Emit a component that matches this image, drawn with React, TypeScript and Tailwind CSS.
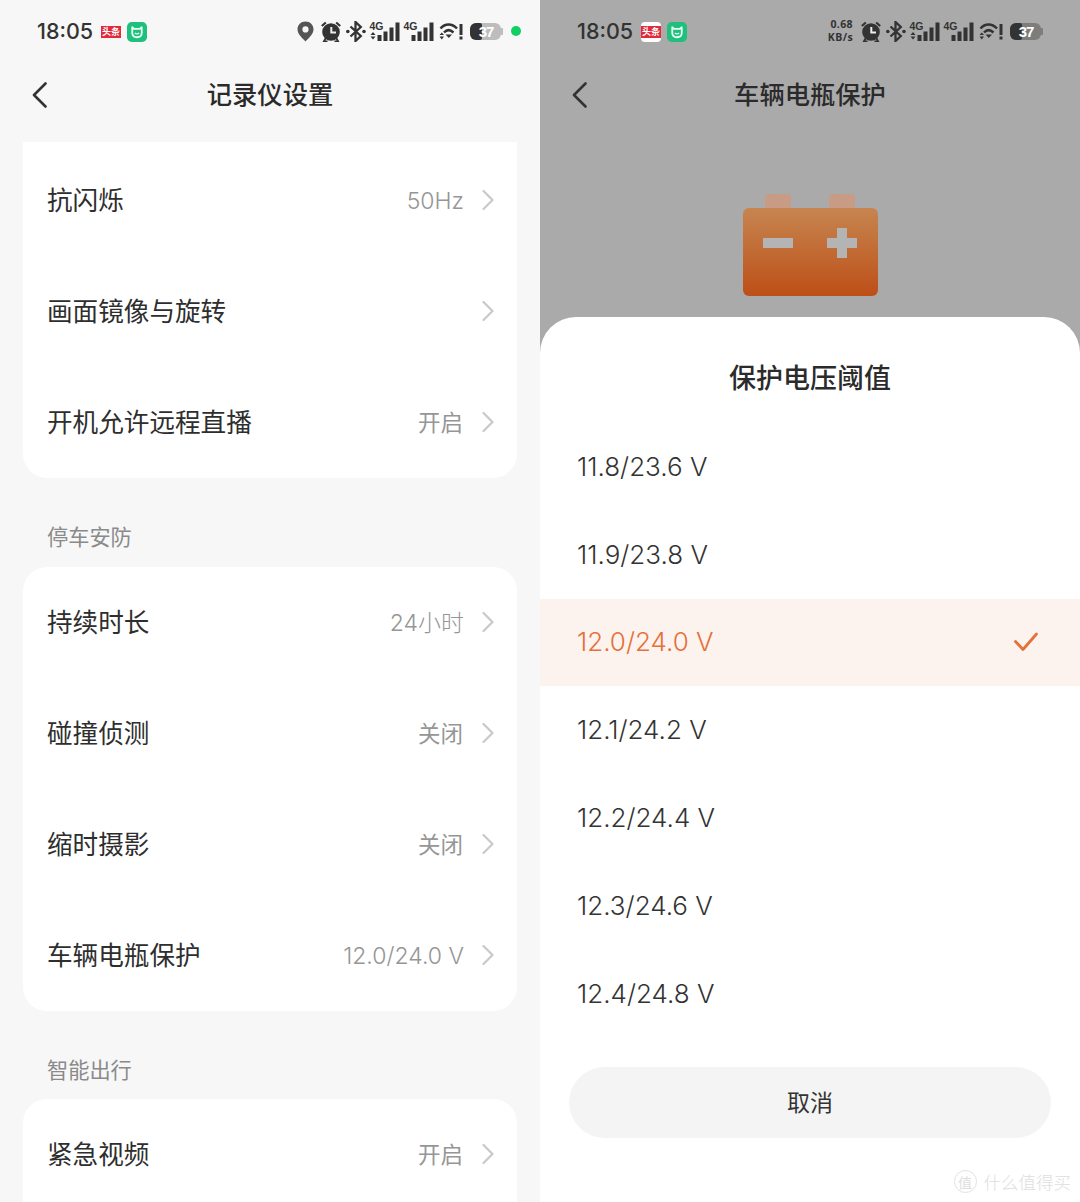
const cjk = { fontFamily: '"Noto Sans CJK SC", sans-serif' };
const num = { fontFamily: 'Inter, "Noto Sans CJK SC", sans-serif' };

function Chevron() {
  return (
    <svg width="12" height="20" viewBox="0 0 12 20" fill="none" className="shrink-0">
      <path d="M1.5 1 L10.5 10 L1.5 19" stroke="#c9c9c9" strokeWidth="2.2" strokeLinecap="round" strokeLinejoin="round" />
    </svg>
  );
}

function Back() {
  return (
    <svg width="16" height="26" viewBox="0 0 16 26" fill="none" className="shrink-0">
      <path d="M13.5 1.5 L2 13 L13.5 24.5" stroke="#333" strokeWidth="2.6" strokeLinecap="round" strokeLinejoin="round" />
    </svg>
  );
}

function Pin() {
  return (
    <svg width="17" height="21" viewBox="0 0 17 21" className="shrink-0">
      <path fillRule="evenodd" fill="#555" d="M8.5 0.5 C3.9 0.5 0.5 4 0.5 8.3 C0.5 13 5 17 8.5 20.5 C12 17 16.5 13 16.5 8.3 C16.5 4 13.1 0.5 8.5 0.5 Z M8.5 5.3 A3.1 3.1 0 1 1 8.5 11.5 A3.1 3.1 0 1 1 8.5 5.3 Z" />
    </svg>
  );
}

function Alarm() {
  return (
    <svg width="20" height="21" viewBox="0 0 20 21" className="shrink-0">
      <circle cx="10" cy="11" r="8.8" fill="#333" />
      <path d="M10.3 6 V11.6 H15" stroke="#eeeeee" strokeWidth="2" fill="none" />
      <path d="M0.8 5 L4.8 1.5 M19.2 5 L15.2 1.5" stroke="#333" strokeWidth="2.2" />
      <path d="M4.5 17.5 L2.8 20.5 H6.5 M15.5 17.5 L17.2 20.5 H13.5" stroke="#333" strokeWidth="1.8" fill="none" />
    </svg>
  );
}

function Bluetooth() {
  return (
    <svg width="20" height="21" viewBox="0 0 20 21" className="shrink-0">
      <path d="M4.5 5.5 L14.8 15 L9.5 20 V1 L14.8 6 L4.5 15.5" stroke="#333" strokeWidth="2.3" fill="none" />
      <circle cx="1.8" cy="10.5" r="1.8" fill="#333" />
      <circle cx="18" cy="10.5" r="1.8" fill="#333" />
    </svg>
  );
}

function Signal({ arrows }: { arrows: boolean }) {
  return (
    <div className="relative h-[21px] w-[31px] shrink-0">
      <svg width="31" height="21" viewBox="0 0 31 21" className="block">
        <g fill="#333">
          {arrows && (
            <>
              <path d="M1.5 14 L4 11 L6.5 14 Z" />
              <path d="M1.5 15.5 L6.5 15.5 L4 18.5 Z" />
            </>
          )}
          <rect x="8.5" y="14" width="4" height="6" />
          <rect x="14.5" y="10.5" width="4" height="9.5" />
          <rect x="20.5" y="6.5" width="4" height="13.5" />
          <rect x="26.5" y="1.5" width="4" height="18.5" />
        </g>
      </svg>
      <span className="absolute left-[0.5px] top-0 text-[10.5px] font-bold leading-[10px] text-[#333]" style={{ fontFamily: '"Liberation Sans", sans-serif' }}>4G</span>
    </div>
  );
}

function Wifi() {
  return (
    <svg width="24" height="21" viewBox="0 0 24 21" className="shrink-0">
      <g fill="none" stroke="#333" strokeWidth="2.5">
        <path d="M1.5 7.5 C6 2.2 13 2.2 18 7.5" />
        <path d="M5 11.5 C8 8.3 11 8.3 14.5 11.5" />
      </g>
      <path d="M6.5 13.5 L13 13.5 L9.8 17 Z" fill="#333" />
      <path d="M0.5 14 L2.8 11.5 L5 14 Z M0.5 15.5 L5 15.5 L2.8 18.5 Z" fill="#333" />
      <rect x="20.5" y="3" width="3" height="11" fill="#333" />
      <rect x="20.5" y="15.5" width="3" height="3" fill="#333" />
    </svg>
  );
}

function Battery({ gray }: { gray: string }) {
  return (
    <div className="flex shrink-0 items-center">
      <div className="relative flex h-[17px] w-[31px] overflow-hidden rounded-[6px]" style={{ background: gray }}>
        <div className="h-full w-[12px] rounded-r-[2px] bg-[#333]" />
        <span className="absolute inset-0 flex items-center justify-center pl-[1px] text-[15px] font-bold leading-none tracking-[-1px] text-white" style={{ fontFamily: '"Liberation Sans", sans-serif' }}>37</span>
      </div>
      <div className="h-[7px] w-[2px] rounded-r-[1px]" style={{ background: gray }} />
    </div>
  );
}

function MiBadge() {
  return (
    <svg width="20" height="20" viewBox="0 0 19 19" className="shrink-0">
      <rect width="19" height="19" rx="4.5" fill="#1fc07e" />
      <path d="M5 5 L7 6.5 H12 L14 5 V10.5 C14 13 12 14.5 9.5 14.5 C7 14.5 5 13 5 10.5 Z" fill="none" stroke="#e9fff4" strokeWidth="1.7" strokeLinejoin="round" />
      <path d="M7.5 10.5 C8.5 11.5 10.5 11.5 11.5 10.5" fill="none" stroke="#e9fff4" strokeWidth="1.2" />
    </svg>
  );
}

function StatusBar({ dark }: { dark: boolean }) {
  return (
    <div className="flex h-[62px] shrink-0 items-center pl-[37px] pr-[19px]">
      <span className="w-[56px] pt-[2px] text-[21.5px] font-medium leading-none text-[#333]" style={{ fontFamily: 'Inter, sans-serif' }}>18:05</span>
      {dark ? (
        <div className="ml-[8px] mt-[1px] flex h-[20px] w-[20px] items-center justify-center rounded-[4px] bg-white">
          <span className="flex h-[12px] w-[20px] items-center justify-center bg-[#e5283a] text-[9px] font-bold leading-none text-white" style={cjk}>头条</span>
        </div>
      ) : (
        <div className="ml-[8px] mt-[1px] flex h-[12px] w-[20px] items-center justify-center bg-[#e5283a] text-[9px] font-bold leading-none text-white" style={cjk}>头条</div>
      )}
      <div className="ml-[6px] mt-[1px]"><MiBadge /></div>
      <div className="ml-auto flex items-center">
        {dark ? (
          <div className="mr-[8px] flex flex-col items-end text-[10.5px] font-bold leading-[13px] tracking-[0.4px] text-[#333]" style={{ fontFamily: '"Open Sans", sans-serif' }}>
            <span>0.68</span>
            <span>KB/s</span>
          </div>
        ) : (
          <div className="mr-[7px]"><Pin /></div>
        )}
        <Alarm />
        <div className="ml-[5px]"><Bluetooth /></div>
        <div className="ml-[3px]"><Signal arrows /></div>
        <div className="ml-[3px]"><Signal arrows={false} /></div>
        <div className="ml-[5px]"><Wifi /></div>
        <div className="ml-[7px]"><Battery gray={dark ? '#7d7d7d' : '#bdbdbd'} /></div>
        <div className={dark ? 'ml-[8px] h-[10px] w-[10px]' : 'ml-[8px] h-[10px] w-[10px] rounded-full bg-[#12cf62]'} />
      </div>
    </div>
  );
}

function Header({ title }: { title: string }) {
  return (
    <div className="relative flex h-[66px] shrink-0 items-center justify-center">
      <div className="absolute left-[32px] top-[20px]"><Back /></div>
      <span className="pb-[2px] text-[25.3px] font-medium leading-none text-[#2b2b2b]" style={cjk}>{title}</span>
    </div>
  );
}

function Row({ label, value, isNum }: { label: string; value?: string; isNum?: boolean }) {
  return (
    <div className="flex h-[111px] shrink-0 items-center justify-between pb-[1px] pl-[24px] pr-[23px]">
      <span className="pb-[2px] text-[25.6px] leading-none text-[#2e2e2e]" style={cjk}>{label}</span>
      <div className="flex items-center gap-[19px]">
        {value && (
          <span
            className={isNum ? '-mr-[1px] pt-[2px] text-[23px] font-light leading-none text-[#969696]' : 'pb-[1px] text-[22.5px] leading-none text-[#969696]'}
            style={isNum ? num : cjk}
          >
            {value}
          </span>
        )}
        <Chevron />
      </div>
    </div>
  );
}

function SectionLabel({ text, short }: { text: string; short?: boolean }) {
  return (
    <div className={short ? 'flex h-[88px] shrink-0 items-end pb-[20px] pl-[47px] text-[21.2px] leading-none text-[#8a8a8a]' : 'flex h-[89px] shrink-0 items-end pb-[21px] pl-[47px] text-[21.2px] leading-none text-[#8a8a8a]'} style={cjk}>
      {text}
    </div>
  );
}

const options = ['11.8/23.6 V', '11.9/23.8 V', '12.0/24.0 V', '12.1/24.2 V', '12.2/24.4 V', '12.3/24.6 V', '12.4/24.8 V'];

function BatteryArt() {
  return (
    <svg width="136" height="104" viewBox="0 0 136 104" className="shrink-0">
      <defs>
        <linearGradient id="bat" x1="0" y1="0" x2="0" y2="1">
          <stop offset="0" stopColor="#c78550" />
          <stop offset="1" stopColor="#bd4f17" />
        </linearGradient>
      </defs>
      <path d="M22 15 V5 Q22 1 26 1 H44 Q48 1 48 5 V15 Z M86 15 V5 Q86 1 90 1 H108 Q112 1 112 5 V15 Z" fill="#c79b84" />
      <rect x="0" y="15" width="135" height="88" rx="6" fill="url(#bat)" />
      <rect x="20" y="45" width="30" height="10" fill="#b4b4b4" />
      <path d="M94 35 H104 V45 H114 V55 H104 V65 H94 V55 H84 V45 H94 Z" fill="#b4b4b4" />
    </svg>
  );
}

export default function App() {
  return (
    <div className="relative flex h-[1202px] w-[1080px] overflow-hidden bg-white">
      <div className="flex h-full w-[540px] shrink-0 flex-col bg-[#f7f7f7]">
        <StatusBar dark={false} />
        <Header title="记录仪设置" />
        <div className="flex flex-col px-[23px] pt-[14px]">
          <div className="flex flex-col rounded-b-[24px] bg-white pt-[3px]">
            <Row label="抗闪烁" value="50Hz" isNum />
            <Row label="画面镜像与旋转" />
            <Row label="开机允许远程直播" value="开启" />
          </div>
        </div>
        <SectionLabel text="停车安防" />
        <div className="flex flex-col px-[23px]">
          <div className="flex flex-col rounded-[24px] bg-white">
            <Row label="持续时长" value="24小时" isNum />
            <Row label="碰撞侦测" value="关闭" />
            <Row label="缩时摄影" value="关闭" />
            <Row label="车辆电瓶保护" value="12.0/24.0 V" isNum />
          </div>
        </div>
        <SectionLabel text="智能出行" short />
        <div className="flex flex-col px-[23px]">
          <div className="flex flex-col rounded-t-[24px] bg-white">
            <Row label="紧急视频" value="开启" />
          </div>
        </div>
      </div>

      <div className="flex h-full w-[540px] shrink-0 flex-col bg-[#aaaaaa]">
        <StatusBar dark />
        <Header title="车辆电瓶保护" />
        <div className="flex h-[189px] shrink-0 justify-center pl-[2px] pt-[65px]">
          <BatteryArt />
        </div>
        <div className="flex flex-1 flex-col rounded-t-[36px] bg-white">
          <div className="flex h-[106px] shrink-0 items-center justify-center pt-[12px] text-[27px] font-medium leading-none text-[#2b2b2b]" style={cjk}>
            保护电压阈值
          </div>
          <div className="flex flex-col">
            {options.map((o) => {
              const on = o === '12.0/24.0 V';
              return (
                <div key={o} className={on ? 'flex h-[87.8px] items-center justify-between bg-[#fdf3ee] pl-[37px] pr-[42px]' : 'flex h-[87.8px] items-center justify-between pl-[37px] pr-[42px]'}>
                  <span className={on ? 'text-[26px] font-light leading-none text-[#e4703a]' : 'text-[26px] font-light leading-none text-[#333]'} style={num}>{o}</span>
                  {on && (
                    <svg width="24" height="20" viewBox="0 0 24 20" fill="none">
                      <path d="M1.5 9.5 L9 17.5 L22.5 2" stroke="#e4703a" strokeWidth="2.8" strokeLinecap="round" strokeLinejoin="round" />
                    </svg>
                  )}
                </div>
              );
            })}
          </div>
          <div className="flex flex-col px-[29px] pt-[29px]">
            <div className="flex h-[71px] items-center justify-center rounded-full bg-[#f4f4f4] pb-[2px] text-[23px] leading-none text-[#333]" style={cjk}>
              取消
            </div>
          </div>
        </div>
      </div>

      <div className="absolute bottom-[9px] right-[9px] flex items-center gap-[7px] text-[#dedede]" style={cjk}>
        <span className="flex h-[23px] w-[23px] items-center justify-center rounded-full border border-[#e2e2e2] text-[14px] leading-none">值</span>
        <span className="text-[17.5px] font-light leading-none">什么值得买</span>
      </div>
    </div>
  );
}
